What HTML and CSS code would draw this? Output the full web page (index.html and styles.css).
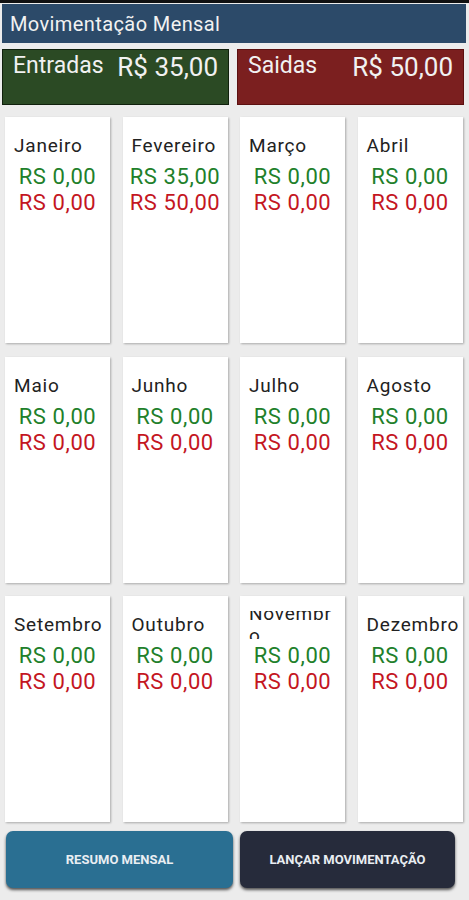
FILE: index.html
```html
<!DOCTYPE html>
<html lang="pt-BR">
<head>
    <meta charset="UTF-8">
    <meta name="viewport" content="width=device-width, initial-scale=1.0">
    <title>Movimentação Mensal</title>
    <link rel="stylesheet" href="styles.css">
</head>
<body>
    <div class="top-strip"></div>

    <header class="title-bar">
        <h1>Movimentação Mensal</h1>
    </header>

    <div class="summary">
        <div class="summary-box income">
            <span class="summary-label">Entradas</span>
            <span class="summary-value">R$ 35,00</span>
        </div>
        <div class="summary-box expense">
            <span class="summary-label">Saidas</span>
            <span class="summary-value">R$ 50,00</span>
        </div>
    </div>

    <div class="month-grid">
        <div class="month-card">
            <div class="month-name"><span>Janeiro</span></div>
            <p class="value in">RS 0,00</p>
            <p class="value out">RS 0,00</p>
        </div>
        <div class="month-card">
            <div class="month-name"><span>Fevereiro</span></div>
            <p class="value in">RS 35,00</p>
            <p class="value out">RS 50,00</p>
        </div>
        <div class="month-card">
            <div class="month-name"><span>Março</span></div>
            <p class="value in">RS 0,00</p>
            <p class="value out">RS 0,00</p>
        </div>
        <div class="month-card">
            <div class="month-name"><span>Abril</span></div>
            <p class="value in">RS 0,00</p>
            <p class="value out">RS 0,00</p>
        </div>
        <div class="month-card">
            <div class="month-name"><span>Maio</span></div>
            <p class="value in">RS 0,00</p>
            <p class="value out">RS 0,00</p>
        </div>
        <div class="month-card">
            <div class="month-name"><span>Junho</span></div>
            <p class="value in">RS 0,00</p>
            <p class="value out">RS 0,00</p>
        </div>
        <div class="month-card">
            <div class="month-name"><span>Julho</span></div>
            <p class="value in">RS 0,00</p>
            <p class="value out">RS 0,00</p>
        </div>
        <div class="month-card">
            <div class="month-name"><span>Agosto</span></div>
            <p class="value in">RS 0,00</p>
            <p class="value out">RS 0,00</p>
        </div>
        <div class="month-card">
            <div class="month-name"><span>Setembro</span></div>
            <p class="value in">RS 0,00</p>
            <p class="value out">RS 0,00</p>
        </div>
        <div class="month-card">
            <div class="month-name"><span>Outubro</span></div>
            <p class="value in">RS 0,00</p>
            <p class="value out">RS 0,00</p>
        </div>
        <div class="month-card">
            <div class="month-name wrap"><span>Novembro</span></div>
            <p class="value in">RS 0,00</p>
            <p class="value out">RS 0,00</p>
        </div>
        <div class="month-card">
            <div class="month-name"><span>Dezembro</span></div>
            <p class="value in">RS 0,00</p>
            <p class="value out">RS 0,00</p>
        </div>
    </div>

    <div class="actions">
        <button class="btn btn-summary">RESUMO MENSAL</button>
        <button class="btn btn-launch">LANÇAR MOVIMENTAÇÃO</button>
    </div>
</body>
</html>
```

FILE: styles.css
```css
:root {
    --header-color: #2c4a69;
    --income-bg: #2b4a24;
    --expense-bg: #7b1f1f;
    --income-text: #21802a;
    --expense-text: #c4161f;
    --page-bg: #ececec;
}

* {
    margin: 0;
    padding: 0;
    box-sizing: border-box;
    font-family: Roboto, "Noto Sans", sans-serif;
}

body {
    background-color: var(--page-bg);
    width: 469px;
    height: 900px;
    overflow: hidden;
}

.top-strip {
    height: 3px;
    background-color: #111;
}

.title-bar {
    margin: 1px 3px 0 2px;
    height: 39px;
    background-color: var(--header-color);
    display: flex;
    align-items: center;
    padding-left: 8px;
}

.title-bar h1 {
    font-size: 20px;
    font-weight: 400;
    letter-spacing: 0.4px;
    color: #f2f2f2;
}

.summary {
    display: grid;
    grid-template-columns: 227px 227px;
    column-gap: 8px;
    margin: 6px 0 0 2px;
}

.summary-box {
    height: 56px;
    display: flex;
    justify-content: space-between;
    align-items: flex-start;
    padding: 2px 10px 0 10px;
    color: #f1f1f1;
}

.summary-box.income {
    background-color: var(--income-bg);
    border: 1px solid #10200c;
}

.summary-box.expense {
    background-color: var(--expense-bg);
    border: 1px solid #5c1010;
}

.summary-label {
    font-size: 23px;
}

.summary-value {
    font-size: 26px;
    line-height: 30px;
}

.month-grid {
    display: grid;
    grid-template-columns: repeat(4, 105px);
    grid-auto-rows: 226px;
    column-gap: 12.5px;
    row-gap: 13.5px;
    margin: 12px 0 0 5px;
}

.month-card {
    background-color: #fff;
    box-shadow: 1px 1px 2px rgba(0, 0, 0, 0.28);
    padding-top: 15px;
    overflow: hidden;
}

.month-name {
    height: 28px;
    display: flex;
    align-items: center;
    padding-left: 9px;
    font-size: 19px;
    line-height: 22px;
    letter-spacing: 0.8px;
    color: #222;
    white-space: nowrap;
    overflow: hidden;
}

.month-name.wrap span {
    white-space: normal;
    word-break: break-all;
    width: 86px;
}

.value {
    text-align: center;
    font-size: 22px;
    line-height: 26px;
    letter-spacing: 0.6px;
}

.value.in {
    color: var(--income-text);
    margin-top: 4px;
}

.value.out {
    color: var(--expense-text);
}

.actions {
    display: grid;
    grid-template-columns: 227px 215px;
    column-gap: 7px;
    margin: 9px 0 0 6px;
}

.btn {
    height: 57px;
    border: none;
    border-radius: 7px;
    color: #e9eef2;
    font-size: 13px;
    font-weight: 700;
    box-shadow: 0 2px 3px rgba(0, 0, 0, 0.65);
}

.btn-summary {
    background-color: #2a6f92;
}

.btn-launch {
    background-color: #262b3b;
}
```
